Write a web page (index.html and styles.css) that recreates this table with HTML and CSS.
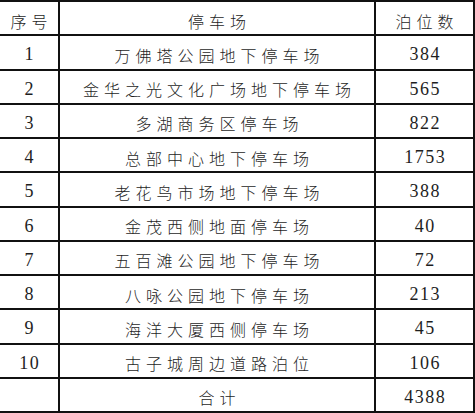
FILE: index.html
```html
<!DOCTYPE html>
<html lang="zh-CN">
<head>
<meta charset="utf-8">
<link rel="stylesheet" href="styles.css">
</head>
<body>
<div class="grid">
  <div class="cell zh">序号</div>
  <div class="cell zh">停车场</div>
  <div class="cell zh">泊位数</div>

  <div class="cell num">1</div>
  <div class="cell zh">万佛塔公园地下停车场</div>
  <div class="cell num">384</div>

  <div class="cell num">2</div>
  <div class="cell zh">金华之光文化广场地下停车场</div>
  <div class="cell num">565</div>

  <div class="cell num">3</div>
  <div class="cell zh">多湖商务区停车场</div>
  <div class="cell num">822</div>

  <div class="cell num">4</div>
  <div class="cell zh">总部中心地下停车场</div>
  <div class="cell num">1753</div>

  <div class="cell num">5</div>
  <div class="cell zh">老花鸟市场地下停车场</div>
  <div class="cell num">388</div>

  <div class="cell num">6</div>
  <div class="cell zh">金茂西侧地面停车场</div>
  <div class="cell num">40</div>

  <div class="cell num">7</div>
  <div class="cell zh">五百滩公园地下停车场</div>
  <div class="cell num">72</div>

  <div class="cell num">8</div>
  <div class="cell zh">八咏公园地下停车场</div>
  <div class="cell num">213</div>

  <div class="cell num">9</div>
  <div class="cell zh">海洋大厦西侧停车场</div>
  <div class="cell num">45</div>

  <div class="cell num">10</div>
  <div class="cell zh">古子城周边道路泊位</div>
  <div class="cell num">106</div>

  <div class="cell"></div>
  <div class="cell zh">合计</div>
  <div class="cell num">4388</div>
</div>
</body>
</html>
```
FILE: styles.css
```css
html, body {
  margin: 0;
  padding: 0;
  background: #fff;
}

.grid {
  width: 475px;
  height: 413px;
  box-sizing: border-box;
  display: grid;
  grid-template-columns: 58px 314px 97px;
  grid-template-rows: repeat(12, 32.25px);
  gap: 2px;
  padding: 2px 2px 2px 0;
  background: #111;
}

.cell {
  background: #fff;
  display: flex;
  align-items: center;
  justify-content: center;
  padding-top: 5px;
  box-sizing: border-box;
  color: #1e1e1e;
  white-space: nowrap;
}

.zh {
  font-family: "Noto Sans CJK SC", sans-serif;
  font-weight: 300;
  font-size: 16px;
  letter-spacing: 5px;
  text-indent: 5px;
}

.num {
  font-family: "Liberation Serif", serif;
  font-size: 18px;
  letter-spacing: 1.5px;
  text-indent: 1.5px;
}
```
